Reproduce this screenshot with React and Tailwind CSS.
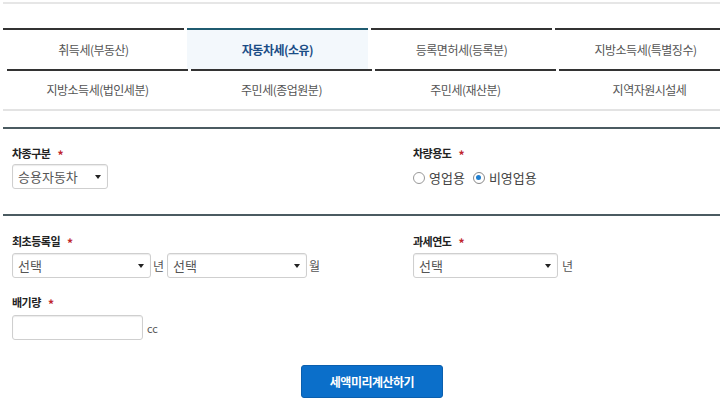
import React from 'react';

const FONT = { fontFamily: '"Noto Sans CJK KR", "Noto Sans", sans-serif' };

const TABS_TOP = ['취득세(부동산)', '자동차세(소유)', '등록면허세(등록분)', '지방소득세(특별징수)'];
const TABS_BOTTOM = ['지방소득세(법인세분)', '주민세(종업원분)', '주민세(재산분)', '지역자원시설세'];

function Tab({ label, active }) {
  return (
    <div
      className={
        'w-[181px] shrink-0 h-full flex items-center justify-center text-[12px] tracking-[-0.5px] border-t-2 ' +
        (active
          ? 'border-[#1f5b70] bg-[#f3f8fc] text-[#1b4d86] font-bold'
          : 'border-[#333] text-[#555]')
      }
    >
      {label}
    </div>
  );
}

function Label({ children }) {
  return (
    <div className="h-[14px] flex items-center gap-[7px] text-[11px] font-bold text-[#222] tracking-[-0.5px]">
      {children}
      <span className="text-[#c0262d] text-[12px] leading-none mt-[3px]">*</span>
    </div>
  );
}

function Select({ value, width }) {
  return (
    <div
      className={
        'h-[25px] flex items-center justify-between pl-[5px] pr-[6px] border border-[#cfcfcf] rounded-[3px] bg-white shadow-[inset_0_1px_1px_rgba(0,0,0,0.08)] text-[13px] text-[#555] ' +
        width
      }
    >
      <span>{value}</span>
      <svg width="6" height="4" viewBox="0 0 6 4">
        <path d="M0 0 L6 0 L3 4 Z" fill="#222" />
      </svg>
    </div>
  );
}

function Radio({ checked, label }) {
  return (
    <div className="flex items-center gap-[4px] text-[13px] text-[#444]">
      <span
        className={
          'w-[12px] h-[12px] rounded-full border flex items-center justify-center ' +
          (checked ? 'border-[#888]' : 'border-[#999]')
        }
      >
        {checked && <span className="w-[5px] h-[5px] rounded-full bg-[#1f7fd0]" />}
      </span>
      <span>{label}</span>
    </div>
  );
}

export default function App() {
  return (
    <div className="w-[720px] h-[412px] overflow-hidden bg-white" style={FONT}>
      <div className="mt-[2px] ml-[3px] h-[2px] bg-[#e6e6e6]" />

      {/* Tabs */}
      <div className="mt-[24px] h-[41px] flex gap-[3px] pl-[3px]">
        {TABS_TOP.map((t, i) => (
          <Tab key={t} label={t} active={i === 1} />
        ))}
      </div>
      <div className="h-[40px] flex gap-[3px] pl-[7px]">
        {TABS_BOTTOM.map((t) => (
          <Tab key={t} label={t} />
        ))}
      </div>
      <div className="ml-[3px] h-[2px] bg-[#e3e3e3]" />

      {/* Section 1 */}
      <div className="mt-[16px] ml-[3px] h-[2px] bg-[#4b5b61]" />
      <div className="h-[85px] grid grid-cols-[401px_1fr] pl-[12px] pt-[17px]">
        <div className="flex flex-col gap-[4px]">
          <Label>차종구분</Label>
          <Select value="승용자동차" width="w-[96px]" />
        </div>
        <div className="flex flex-col gap-[8px]">
          <Label>차량용도</Label>
          <div className="flex items-center gap-[8px]">
            <Radio label="영업용" />
            <Radio checked label="비영업용" />
          </div>
        </div>
      </div>

      {/* Section 2 */}
      <div className="ml-[3px] h-[2px] bg-[#4b5b61]" />
      <div className="grid grid-cols-[401px_1fr] pl-[12px] pt-[18px]">
        <div className="flex flex-col">
          <Label>최초등록일</Label>
          <div className="mt-[5px] flex items-center gap-[2px] text-[12px] text-[#555]">
            <Select value="선택" width="w-[139px]" />
            <span className="mr-[1px]">년</span>
            <Select value="선택" width="w-[140px]" />
            <span>월</span>
          </div>
          <div className="mt-[17px]">
            <Label>배기량</Label>
          </div>
          <div className="mt-[6px] flex items-end gap-[4px] text-[11px] text-[#555]">
            <div className="w-[131px] h-[25px] border border-[#cfcfcf] rounded-[3px] shadow-[inset_0_1px_1px_rgba(0,0,0,0.08)]" />
            <span className="mb-[4px]">cc</span>
          </div>
        </div>
        <div className="flex flex-col">
          <Label>과세연도</Label>
          <div className="mt-[5px] flex items-center gap-[4px] text-[12px] text-[#555]">
            <Select value="선택" width="w-[145px]" />
            <span>년</span>
          </div>
        </div>
      </div>

      <div className="mt-[25px] flex pl-[301px]">
        <button className="w-[142px] h-[33px] rounded-[3px] bg-[#0b6fca] border border-[#0a5fae] text-white text-[12px] font-bold tracking-[-0.5px]">
          세액미리계산하기
        </button>
      </div>
    </div>
  );
}
